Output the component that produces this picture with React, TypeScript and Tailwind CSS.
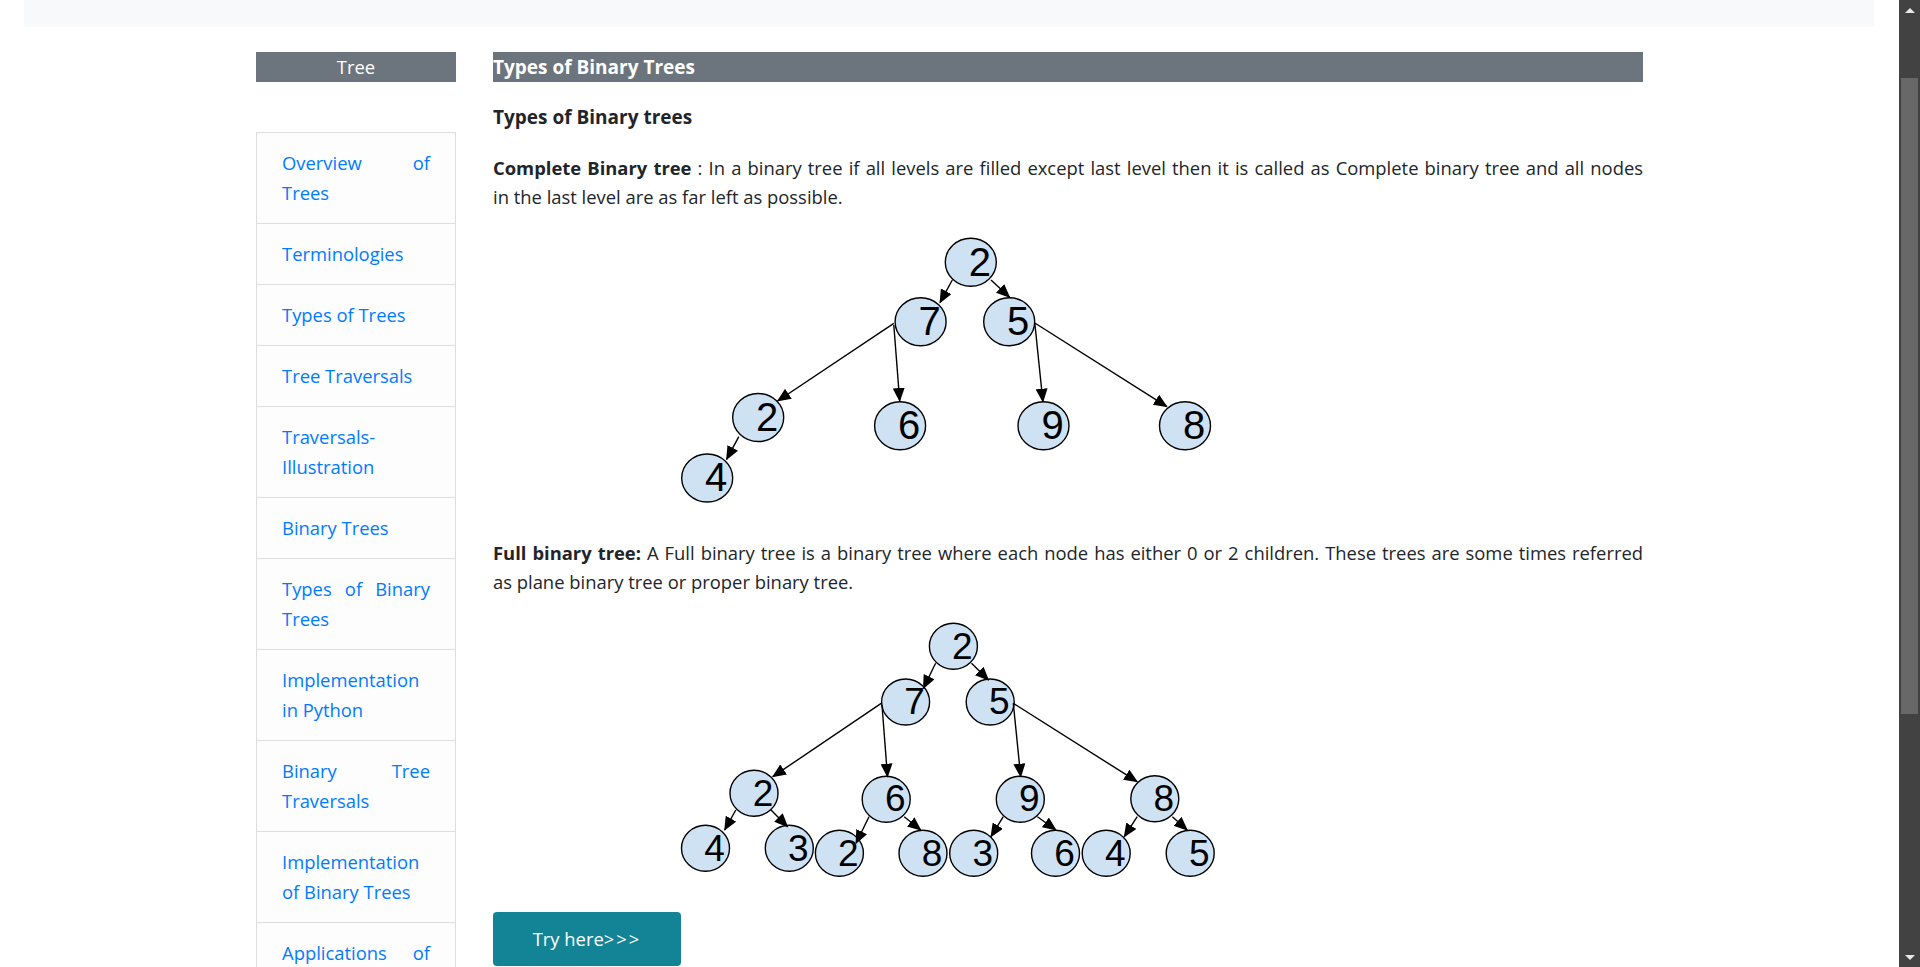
import React from 'react';

type Node = [number, number, string];
type Edge = [number, number, number, number];

const NAV: string[][] = [
  ['Overview of', 'Trees'],
  ['Terminologies'],
  ['Types of Trees'],
  ['Tree Traversals'],
  ['Traversals-', 'Illustration'],
  ['Binary Trees'],
  ['Types of Binary', 'Trees'],
  ['Implementation', 'in Python'],
  ['Binary Tree', 'Traversals'],
  ['Implementation', 'of Binary Trees'],
  ['Applications of', 'Trees'],
];

const TREE1_NODES: Node[] = [
  [970.8, 262.3, '2'],
  [920.6, 321.7, '7'],
  [1009.2, 321.7, '5'],
  [758.2, 417.5, '2'],
  [900.1, 425.8, '6'],
  [1043.5, 425.8, '9'],
  [1185, 425.8, '8'],
  [707.2, 478, '4'],
];

const TREE1_EDGES: Edge[] = [
  [952.3, 280, 940, 302.7],
  [991, 280, 1009.6, 297.3],
  [893.8, 323.3, 777.6, 401],
  [893.8, 325, 899.7, 401],
  [1034.8, 323, 1042.9, 401.7],
  [1034.8, 323, 1166.9, 406.7],
  [738.8, 436.7, 726.6, 459.3],
];

const TREE2_NODES: Node[] = [
  [953.4, 646.3, '2'],
  [905.6, 702, '7'],
  [990.2, 702, '5'],
  [754, 793.3, '2'],
  [886.2, 799.2, '6'],
  [1020.3, 799.2, '9'],
  [1154.8, 798.8, '8'],
  [705.5, 848.3, '4'],
  [789.3, 848.3, '3'],
  [839.4, 853.3, '2'],
  [923, 853.3, '8'],
  [973.7, 853.3, '3'],
  [1055.5, 853.3, '6'],
  [1106.2, 853.3, '4'],
  [1190.2, 853.3, '5'],
];

const TREE2_EDGES: Edge[] = [
  [935.6, 663.3, 923.4, 688.3],
  [971.5, 663.3, 988.5, 680],
  [881.2, 703.3, 772.8, 776.7],
  [882, 705, 887.5, 776.7],
  [1013.3, 703.3, 1020.7, 776.7],
  [1013.3, 703.3, 1137.2, 781.7],
  [735.8, 810, 724.7, 830],
  [771, 810, 787.6, 826.7],
  [869, 816.7, 856, 843.3],
  [904.2, 816.7, 920.8, 830],
  [1003.3, 816.7, 991, 836.7],
  [1037.4, 816.7, 1055.9, 830],
  [1137.2, 816.7, 1124.3, 836.7],
  [1172.4, 816.7, 1187.2, 830],
];

function TreeDiagram({
  id,
  top,
  height,
  nodes,
  edges,
  rx,
  ry,
  fontSize,
}: {
  id: string;
  top: number;
  height: number;
  nodes: Node[];
  edges: Edge[];
  rx: number;
  ry: number;
  fontSize: number;
}) {
  return (
    <svg
      width={1150}
      height={height}
      viewBox={`493 ${top} 1150 ${height}`}
      className="block"
    >
      <defs>
        <marker
          id={id}
          markerWidth="14"
          markerHeight="12"
          refX="13"
          refY="6"
          orient="auto"
          markerUnits="userSpaceOnUse"
        >
          <path d="M0,0 L14,6 L0,12 z" fill="#000" />
        </marker>
      </defs>
      {nodes.map(([cx, cy, label], i) => (
        <g key={i}>
          <ellipse cx={cx} cy={cy} rx={rx} ry={ry} fill="#cfe2f3" stroke="#000" strokeWidth="1.4" />
          <text
            x={cx + 9}
            y={cy + fontSize * 0.33}
            textAnchor="middle"
            fontSize={fontSize}
            fontFamily="'Liberation Sans', Arial, sans-serif"
            fill="#000"
          >
            {label}
          </text>
        </g>
      ))}
      {edges.map(([x1, y1, x2, y2], i) => (
        <line
          key={i}
          x1={x1}
          y1={y1}
          x2={x2}
          y2={y2}
          stroke="#000"
          strokeWidth="1.4"
          markerEnd={`url(#${id})`}
        />
      ))}
    </svg>
  );
}

function Sidebar() {
  return (
    <div className="w-[200px] shrink-0">
      <div className="h-[30px] bg-[#6c757d] text-center text-[18.4px] leading-[30px] text-white">Tree</div>
      <ul className="mt-[50px] border-t border-x border-[#dedede]">
        {NAV.map((lines, i) => (
          <li key={i} className="border-b border-[#dedede] bg-[#fdfdfd] px-[25px] py-[15px]">
            <a href="#" className="block text-justify text-[18.4px] leading-[30px] text-[#007bff]">
              {lines.map((line, j) => (
                <span
                  key={j}
                  className={j < lines.length - 1 ? 'block [text-align-last:justify]' : 'block'}
                >
                  {line}
                </span>
              ))}
            </a>
          </li>
        ))}
      </ul>
    </div>
  );
}

function Scrollbar() {
  return (
    <div className="flex h-screen w-[21px] shrink-0 flex-col bg-[#424242]">
      <div className="flex h-[20px] items-center justify-center">
        <div className="h-0 w-0 border-x-[5px] border-b-[5px] border-x-transparent border-b-[#e8e8e8]" />
      </div>
      <div className="h-[58px]" />
      <div className="mx-[2px] h-[636px] bg-[#686868]" />
      <div className="flex-1" />
      <div className="flex h-[20px] items-center justify-center">
        <div className="h-0 w-0 border-x-[5px] border-t-[5px] border-x-transparent border-t-[#e8e8e8]" />
      </div>
    </div>
  );
}

export default function App() {
  return (
    <div className="flex h-screen w-full overflow-hidden bg-white font-['Open_Sans',sans-serif] text-[#212529]">
      <div className="min-w-0 flex-1 overflow-hidden">
        <div className="ml-[24px] mr-[25px] h-[27px] bg-[#f8f9fa]" />
        <div className="flex gap-[37px] pl-[256px] pt-[25px]">
          <Sidebar />
          <main className="w-[1150px] shrink-0">
            <h2 className="h-[30px] bg-[#6c757d] text-[19px] font-bold leading-[30px] text-white">
              Types of Binary Trees
            </h2>
            <h5 className="mt-[23px] text-[19px] font-bold leading-[24px]">Types of Binary trees</h5>
            <p className="mt-[24px] text-justify text-[18.4px] leading-[29.4px]">
              <span className="block [text-align-last:justify]">
                <b>Complete Binary tree</b> : In a binary tree if all levels are filled except last level then it is
                called as Complete binary tree and all nodes
              </span>
              <span className="block">in the last level are as far left as possible.</span>
            </p>
            <TreeDiagram
              id="arrow1"
              top={212}
              height={326}
              nodes={TREE1_NODES}
              edges={TREE1_EDGES}
              rx={25.5}
              ry={24}
              fontSize={40}
            />
            <p className="text-justify text-[18.4px] leading-[29.4px]">
              <span className="block [text-align-last:justify]">
                <b>Full binary tree:</b> A Full binary tree is a binary tree where each node has either 0 or 2
                children. These trees are some times referred
              </span>
              <span className="block">as plane binary tree or proper binary tree.</span>
            </p>
            <TreeDiagram
              id="arrow2"
              top={597}
              height={315}
              nodes={TREE2_NODES}
              edges={TREE2_EDGES}
              rx={24}
              ry={23}
              fontSize={37}
            />
            <button className="h-[54px] w-[188px] rounded-[4px] bg-[#138496] text-[18.4px] leading-[29.4px] text-white">
              Try here<span className="tracking-[2px]">&gt;&gt;&gt;</span>
            </button>
          </main>
        </div>
      </div>
      <Scrollbar />
    </div>
  );
}
